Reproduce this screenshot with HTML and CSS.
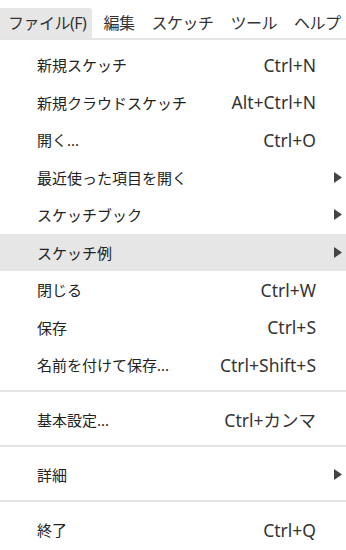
FILE: index.html
```html
<!DOCTYPE html>
<html lang="ja">
<head>
    <meta charset="utf-8">
    <title>ファイル メニュー</title>
    <link rel="stylesheet" href="styles.css">
</head>
<body>
    <div class="menubar">
        <div class="menubar-item active">ファイル(F)</div>
        <div class="menubar-item">編集</div>
        <div class="menubar-item">スケッチ</div>
        <div class="menubar-item">ツール</div>
        <div class="menubar-item">ヘルプ</div>
    </div>
    <div class="menu">
        <div class="menu-item"><span class="label">新規スケッチ</span><span class="shortcut">Ctrl+N</span><span class="arrow"></span></div>
        <div class="menu-item"><span class="label">新規クラウドスケッチ</span><span class="shortcut">Alt+Ctrl+N</span><span class="arrow"></span></div>
        <div class="menu-item"><span class="label">開く...</span><span class="shortcut">Ctrl+O</span><span class="arrow"></span></div>
        <div class="menu-item"><span class="label">最近使った項目を開く</span><span class="shortcut"></span><span class="arrow"><svg width="8" height="11" viewBox="0 0 8 11"><polygon points="0,0 8,5.5 0,11"/></svg></span></div>
        <div class="menu-item"><span class="label">スケッチブック</span><span class="shortcut"></span><span class="arrow"><svg width="8" height="11" viewBox="0 0 8 11"><polygon points="0,0 8,5.5 0,11"/></svg></span></div>
        <div class="menu-item hover"><span class="label">スケッチ例</span><span class="shortcut"></span><span class="arrow"><svg width="8" height="11" viewBox="0 0 8 11"><polygon points="0,0 8,5.5 0,11"/></svg></span></div>
        <div class="menu-item"><span class="label">閉じる</span><span class="shortcut">Ctrl+W</span><span class="arrow"></span></div>
        <div class="menu-item"><span class="label">保存</span><span class="shortcut">Ctrl+S</span><span class="arrow"></span></div>
        <div class="menu-item"><span class="label">名前を付けて保存...</span><span class="shortcut">Ctrl+Shift+S</span><span class="arrow"></span></div>
        <div class="separator"></div>
        <div class="menu-item"><span class="label">基本設定...</span><span class="shortcut">Ctrl+カンマ</span><span class="arrow"></span></div>
        <div class="separator"></div>
        <div class="menu-item"><span class="label">詳細</span><span class="shortcut"></span><span class="arrow"><svg width="8" height="11" viewBox="0 0 8 11"><polygon points="0,0 8,5.5 0,11"/></svg></span></div>
        <div class="separator"></div>
        <div class="menu-item"><span class="label">終了</span><span class="shortcut">Ctrl+Q</span><span class="arrow"></span></div>
    </div>
</body>
</html>
```

FILE: styles.css
```css
body {
    margin: 0;
    background-color: #fff;
    font-family: "Noto Sans", "Noto Sans CJK JP", sans-serif;
    font-size: 15px;
    color: #222;
}

.menubar {
    display: flex;
    align-items: flex-end;
    gap: 17px;
    height: 38px;
    border-bottom: 2px solid #e4e4e4;
    overflow: hidden;
}

.menubar-item {
    height: 30px;
    line-height: 30px;
    font-size: 16px;
    letter-spacing: -0.5px;
    color: #333;
    white-space: nowrap;
}

.menubar-item.active {
    padding: 0 6px 0 8px;
    margin-right: -6px;
    background-color: #e6e6e6;
    border-top-right-radius: 3px;
}

.menu {
    padding-top: 6px;
}

.menu-item {
    display: grid;
    grid-template-columns: 1fr auto 26px;
    align-items: center;
    height: 37.5px;
    padding: 0 4px 0 37px;
    white-space: nowrap;
}

.menu-item.hover {
    background-color: #e6e6e6;
}

.shortcut {
    font-size: 17.5px;
    color: #333;
}

.arrow {
    display: flex;
    justify-content: flex-end;
}

.arrow svg {
    fill: #444;
}

.separator {
    height: 2px;
    margin: 6px 0 9.5px;
    background-color: #e4e4e4;
}
```
